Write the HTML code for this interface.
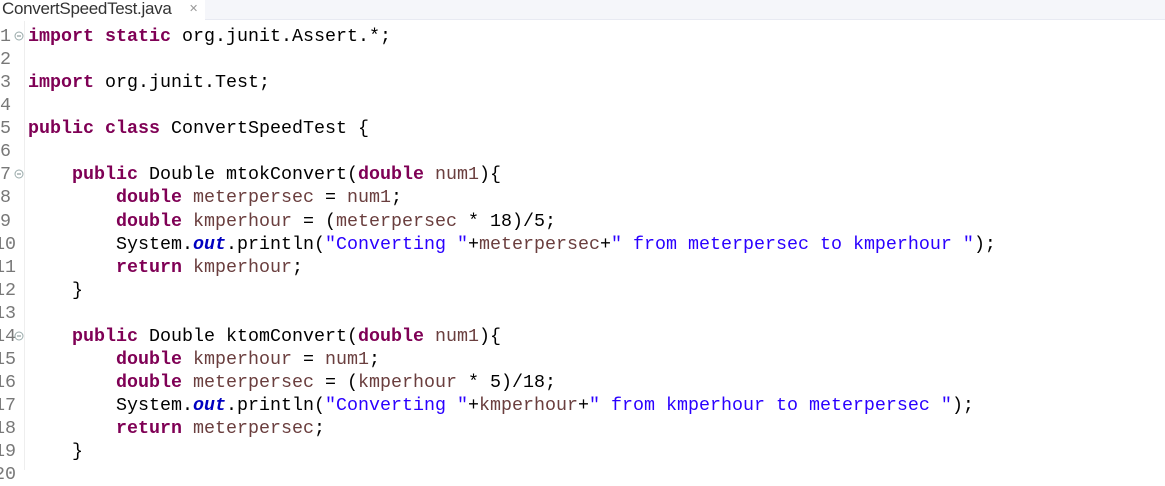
<!DOCTYPE html>
<html><head><meta charset="utf-8"><style>
*{margin:0;padding:0;box-sizing:border-box}
body{width:1165px;height:470px;overflow:hidden;background:#fff;position:relative;font-family:"Liberation Mono",monospace}
.hdr{position:absolute;left:0;top:0;width:1165px;height:20px;background:#f5f6fa;border-bottom:1px solid #e8eaf2}
.tab{position:absolute;left:0;top:0;width:205px;height:21px;background:#fff;font-family:"Liberation Sans",sans-serif;font-size:17px;letter-spacing:-0.3px;color:#333;padding-left:2px;line-height:18px}
.tab .x{position:absolute;left:189px;top:0;font-size:11px;color:#999}
.gut{position:absolute;left:0;top:21px;width:25px;height:449px;border-right:1px solid #eee}
.code{position:absolute;left:0;top:25px;font-size:18.33px;line-height:23.06px;white-space:pre;color:#000}
.ln{display:inline-block;width:28px;color:#787878;position:relative}
.ln2{display:inline-block;width:34px;margin-left:-6px;color:#787878;position:relative}
.k{color:#7f0055;font-weight:bold}
.v{color:#6a3e3e}
.s{color:#2a00ff}
.o{color:#0000c0;font-weight:bold;font-style:italic}
.f{position:absolute;left:14px;top:6px;width:10px;height:10px}
.ln2 .f{left:20px}
</style></head><body>
<div class="hdr"></div>
<div class="tab">ConvertSpeedTest.java<span class="x">✕</span></div>
<div class="gut"></div>
<div class="code"><span class="ln">1<svg class="f" viewBox="0 0 10 10"><circle cx="5" cy="5" r="4" fill="#fff" stroke="#9aa" /><path d="M3 5h4" stroke="#788" /></svg></span><span class="k">import</span> <span class="k">static</span> org.junit.Assert.*;
<span class="ln">2</span>
<span class="ln">3</span><span class="k">import</span> org.junit.Test;
<span class="ln">4</span>
<span class="ln">5</span><span class="k">public</span> <span class="k">class</span> ConvertSpeedTest {
<span class="ln">6</span>
<span class="ln">7<svg class="f" viewBox="0 0 10 10"><circle cx="5" cy="5" r="4" fill="#fff" stroke="#9aa" /><path d="M3 5h4" stroke="#788" /></svg></span>    <span class="k">public</span> Double mtokConvert(<span class="k">double</span> <span class="v">num1</span>){
<span class="ln">8</span>        <span class="k">double</span> <span class="v">meterpersec</span> = <span class="v">num1</span>;
<span class="ln">9</span>        <span class="k">double</span> <span class="v">kmperhour</span> = (<span class="v">meterpersec</span> * 18)/5;
<span class="ln2">10</span>        System.<span class="o">out</span>.println(<span class="s">"Converting "</span>+<span class="v">meterpersec</span>+<span class="s">" from meterpersec to kmperhour "</span>);
<span class="ln2">11</span>        <span class="k">return</span> <span class="v">kmperhour</span>;
<span class="ln2">12</span>    }
<span class="ln2">13</span>
<span class="ln2">14<svg class="f" viewBox="0 0 10 10"><circle cx="5" cy="5" r="4" fill="#fff" stroke="#9aa" /><path d="M3 5h4" stroke="#788" /></svg></span>    <span class="k">public</span> Double ktomConvert(<span class="k">double</span> <span class="v">num1</span>){
<span class="ln2">15</span>        <span class="k">double</span> <span class="v">kmperhour</span> = <span class="v">num1</span>;
<span class="ln2">16</span>        <span class="k">double</span> <span class="v">meterpersec</span> = (<span class="v">kmperhour</span> * 5)/18;
<span class="ln2">17</span>        System.<span class="o">out</span>.println(<span class="s">"Converting "</span>+<span class="v">kmperhour</span>+<span class="s">" from kmperhour to meterpersec "</span>);
<span class="ln2">18</span>        <span class="k">return</span> <span class="v">meterpersec</span>;
<span class="ln2">19</span>    }
<span class="ln2">20</span></div>
</body></html>
